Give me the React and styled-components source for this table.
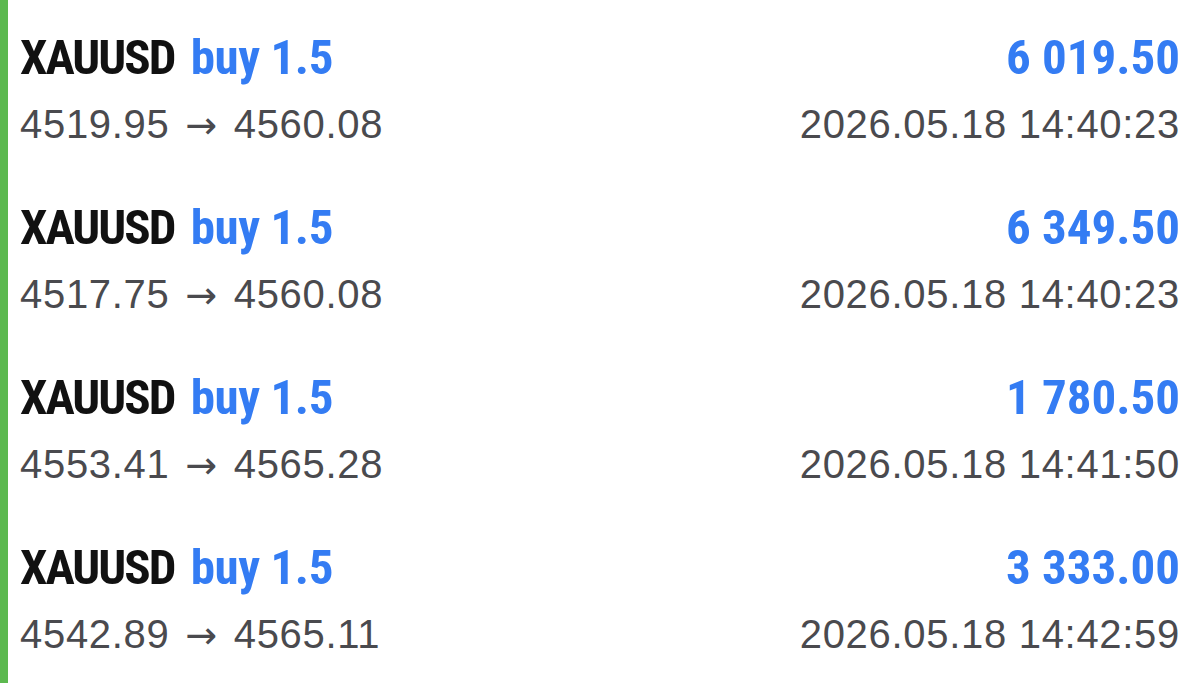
import React from "react";
import styled, { createGlobalStyle } from "styled-components";

const Global = createGlobalStyle`
  html, body { margin: 0; padding: 0; background: #ffffff; }
  body { font-family: "Liberation Sans", Arial, sans-serif; }
`;

const List = styled.div`
  width: 1200px;
  box-sizing: border-box;
  border-left: 8px solid #5cb94f;
  padding-bottom: 3px;
`;

const Row = styled.div`
  display: flex;
  flex-direction: column;
  height: 170px;
  box-sizing: border-box;
  padding: 30px 20px 0 12px;
`;

const Line = styled.div`
  display: flex;
  justify-content: space-between;
  align-items: baseline;
  margin-top: ${(p) => (p.$second ? "14px" : "0")};
`;

const Title = styled.div`
  font-family: Roboto, sans-serif;
  font-stretch: 75%;
  font-weight: 700;
  font-size: 49px;
  line-height: 56px;
  color: #111;
  white-space: nowrap;
`;

const Symbol = styled.span`
  letter-spacing: -2px;
`;

const Side = styled.span`
  color: #347cf3;
  letter-spacing: -0.4px;
  margin-left: 5px;
`;

const Profit = styled.div`
  font-family: Roboto, sans-serif;
  font-stretch: 75%;
  font-weight: 700;
  font-size: 49px;
  line-height: 56px;
  color: #347cf3;
  white-space: nowrap;
`;

const Sub = styled.div`
  font-family: "Liberation Sans", Arial, sans-serif;
  font-size: 40px;
  line-height: 48px;
  letter-spacing: 0.7px;
  color: #4a4a4e;
  white-space: nowrap;
`;

const Arrow = styled.span`
  font-family: "DejaVu Sans", sans-serif;
  font-size: 38px;
  margin: 0 4px;
`;

const trades = [
  { open: "4519.95", close: "4560.08", profit: "6 019.50", time: "2026.05.18 14:40:23" },
  { open: "4517.75", close: "4560.08", profit: "6 349.50", time: "2026.05.18 14:40:23" },
  { open: "4553.41", close: "4565.28", profit: "1 780.50", time: "2026.05.18 14:41:50" },
  { open: "4542.89", close: "4565.11", profit: "3 333.00", time: "2026.05.18 14:42:59" },
];

export default function App() {
  return (
    <>
      <Global />
      <List>
        {trades.map((t, i) => (
          <Row key={i}>
            <Line>
              <Title>
                <Symbol>XAUUSD</Symbol> <Side>buy 1.5</Side>
              </Title>
              <Profit>{t.profit}</Profit>
            </Line>
            <Line $second>
              <Sub>
                {t.open} <Arrow>→</Arrow> {t.close}
              </Sub>
              <Sub>{t.time}</Sub>
            </Line>
          </Row>
        ))}
      </List>
    </>
  );
}
